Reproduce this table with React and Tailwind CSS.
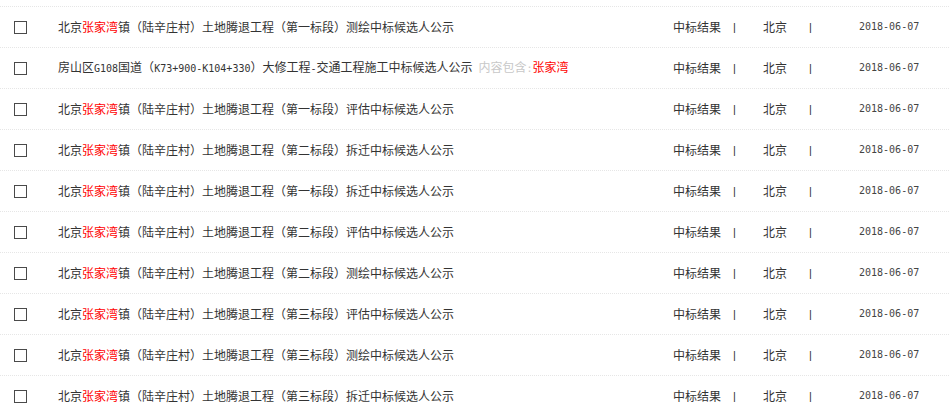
import React from "react";

const rows = [
  { t: [["北京"], ["张家湾", "r"], ["镇（陆辛庄村）土地腾退工程（第一标段）测绘中标候选人公示"]] },
  {
    t: [
      ["房山区"], ["G108", "m"], ["国道（"], ["K73+900-K104+330", "m"], ["）大修工程"], ["-", "m"],
      ["交通工程施工中标候选人公示"], [" ", "m"], ["内容包含", "g"], [":", "gm"], ["张家湾", "r"],
    ],
  },
  { t: [["北京"], ["张家湾", "r"], ["镇（陆辛庄村）土地腾退工程（第一标段）评估中标候选人公示"]] },
  { t: [["北京"], ["张家湾", "r"], ["镇（陆辛庄村）土地腾退工程（第二标段）拆迁中标候选人公示"]] },
  { t: [["北京"], ["张家湾", "r"], ["镇（陆辛庄村）土地腾退工程（第一标段）拆迁中标候选人公示"]] },
  { t: [["北京"], ["张家湾", "r"], ["镇（陆辛庄村）土地腾退工程（第二标段）评估中标候选人公示"]] },
  { t: [["北京"], ["张家湾", "r"], ["镇（陆辛庄村）土地腾退工程（第二标段）测绘中标候选人公示"]] },
  { t: [["北京"], ["张家湾", "r"], ["镇（陆辛庄村）土地腾退工程（第三标段）评估中标候选人公示"]] },
  { t: [["北京"], ["张家湾", "r"], ["镇（陆辛庄村）土地腾退工程（第三标段）测绘中标候选人公示"]] },
  { t: [["北京"], ["张家湾", "r"], ["镇（陆辛庄村）土地腾退工程（第三标段）拆迁中标候选人公示"]] },
];

function Seg({ text, kind }) {
  if (kind === "r") return <span className="text-[#ff0000]">{text}</span>;
  if (kind === "g") return <span className="text-[#c8c8c8]">{text}</span>;
  if (kind === "gm")
    return (
      <span className="text-[#c8c8c8] text-[10px] font-['DejaVu_Sans_Mono',monospace]">{text}</span>
    );
  if (kind === "m")
    return (
      <span className="text-[10px] font-['DejaVu_Sans_Mono',monospace] whitespace-pre">{text}</span>
    );
  return <span>{text}</span>;
}

export default function App() {
  return (
    <div className="w-[949px] h-[409px] overflow-hidden bg-white pt-[6px] font-['Noto_Sans_CJK_SC',sans-serif] text-[12px] text-[#333]">
      {rows.map((row, i) => (
        <div
          key={i}
          className="flex items-center h-[41px] border-t border-dotted border-[#e6e6e6]"
        >
          <div className="w-[58px] pl-[14px] shrink-0 flex items-center">
            <div className="w-[13px] h-[13px] border border-[#4a4a4a] bg-white" />
          </div>
          <div className="flex-1 min-w-0 whitespace-nowrap leading-[12px]">
            {row.t.map(([text, kind], j) => (
              <Seg key={j} text={text} kind={kind} />
            ))}
          </div>
          <div className="w-[276px] shrink-0 flex items-center whitespace-nowrap leading-[12px]">
            <span className="w-[60px]">中标结果</span>
            <span className="w-[30px] text-[11px] font-['Liberation_Sans',sans-serif]">|</span>
            <span className="w-[46px]">北京</span>
            <span className="w-[50px] text-[11px] font-['Liberation_Sans',sans-serif]">|</span>
            <span className="w-[60px] text-[10px] text-[#444] font-['DejaVu_Sans_Mono',monospace]">2018-06-07</span>
          </div>
        </div>
      ))}
    </div>
  );
}
